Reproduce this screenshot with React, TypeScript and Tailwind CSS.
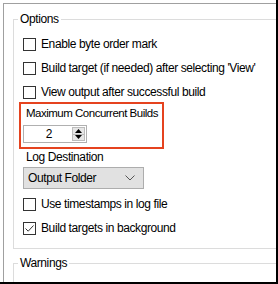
import React from 'react'

const Check: React.FC<{ checked?: boolean }> = ({ checked }) => (
  <span className="flex h-[13px] w-[13px] shrink-0 items-center justify-center border border-[#333333] bg-white">
    {checked && (
      <svg width="11" height="11" viewBox="0 0 11 11">
        <path d="M1.5 5.5 L4.2 8.2 L9.5 2.5" fill="none" stroke="#333333" strokeWidth="1" />
      </svg>
    )}
  </span>
)

const Row: React.FC<{ label: string; checked?: boolean }> = ({ label, checked }) => (
  <div className="flex h-[24px] items-center gap-[5px] pl-[9px] whitespace-nowrap">
    <Check checked={checked} />
    <span>{label}</span>
  </div>
)

export default function App() {
  return (
    <div
      className="flex h-[284px] w-[278px] overflow-hidden border-r-2 border-b-2 border-black bg-white pt-[3px] pl-[3px] text-[12px] leading-4 text-black"
      style={{ fontFamily: '"Liberation Sans", Arial, sans-serif', letterSpacing: '-0.4px' }}
    >
      <div className="flex min-w-0 flex-1 flex-col border-t border-l border-[#a0a0a0]">
        <fieldset className="mt-[7px] ml-[9px] border border-r-0 border-[#dcdcdc] pb-[8px]">
          <legend className="ml-[4px] px-[2px]">Options</legend>
          <div className="pt-[5px]">
            <Row label="Enable byte order mark" />
            <Row label="Build target (if needed) after selecting 'View'" />
            <Row label="View output after successful build" />
          </div>

          <div className="mt-[-2px] ml-[5px] flex h-[47px] w-[145px] flex-col border-2 border-[#e5431f] pt-[1px] pl-[5px]">
            <span className="text-[11.5px] whitespace-nowrap tracking-[-0.5px]">Maximum Concurrent Builds</span>
            <div className="mt-[4px] ml-[-3px] flex h-[18px] w-[64px] border border-[#b0b0b0] bg-white">
              <span className="flex flex-1 items-center justify-center pl-[2px]">2</span>
              <div className="my-[1px] mr-[1px] flex w-[13px] flex-col border border-[#bcbcbc] bg-[#e6e6e6]">
                <span className="flex flex-1 items-center justify-center border-b border-[#bcbcbc]">
                  <svg width="7" height="4" viewBox="0 0 7 4">
                    <path d="M0 4 L3.5 0 L7 4 Z" fill="#000" />
                  </svg>
                </span>
                <span className="flex flex-1 items-center justify-center">
                  <svg width="7" height="4" viewBox="0 0 7 4">
                    <path d="M0 0 L3.5 4 L7 0 Z" fill="#000" />
                  </svg>
                </span>
              </div>
            </div>
          </div>

          <div className="pl-[12px]">Log Destination</div>
          <div className="mt-[2px] ml-[9px] flex h-[22px] w-[121px] items-center justify-between border border-[#adadad] bg-[#e1e1e1] pr-[8px] pl-[4px]">
            <span>Output Folder</span>
            <svg width="10" height="6" viewBox="0 0 10 6">
              <path d="M0.5 0.5 L5 5 L9.5 0.5" fill="none" stroke="#555" strokeWidth="1" />
            </svg>
          </div>

          <div className="mt-[3px]">
            <Row label="Use timestamps in log file" />
            <Row label="Build targets in background" checked />
          </div>
        </fieldset>

        <fieldset className="mt-[6px] ml-[9px] h-[40px] border border-r-0 border-b-0 border-[#dcdcdc]">
          <legend className="ml-[4px] px-[2px]">Warnings</legend>
        </fieldset>
      </div>
    </div>
  )
}
